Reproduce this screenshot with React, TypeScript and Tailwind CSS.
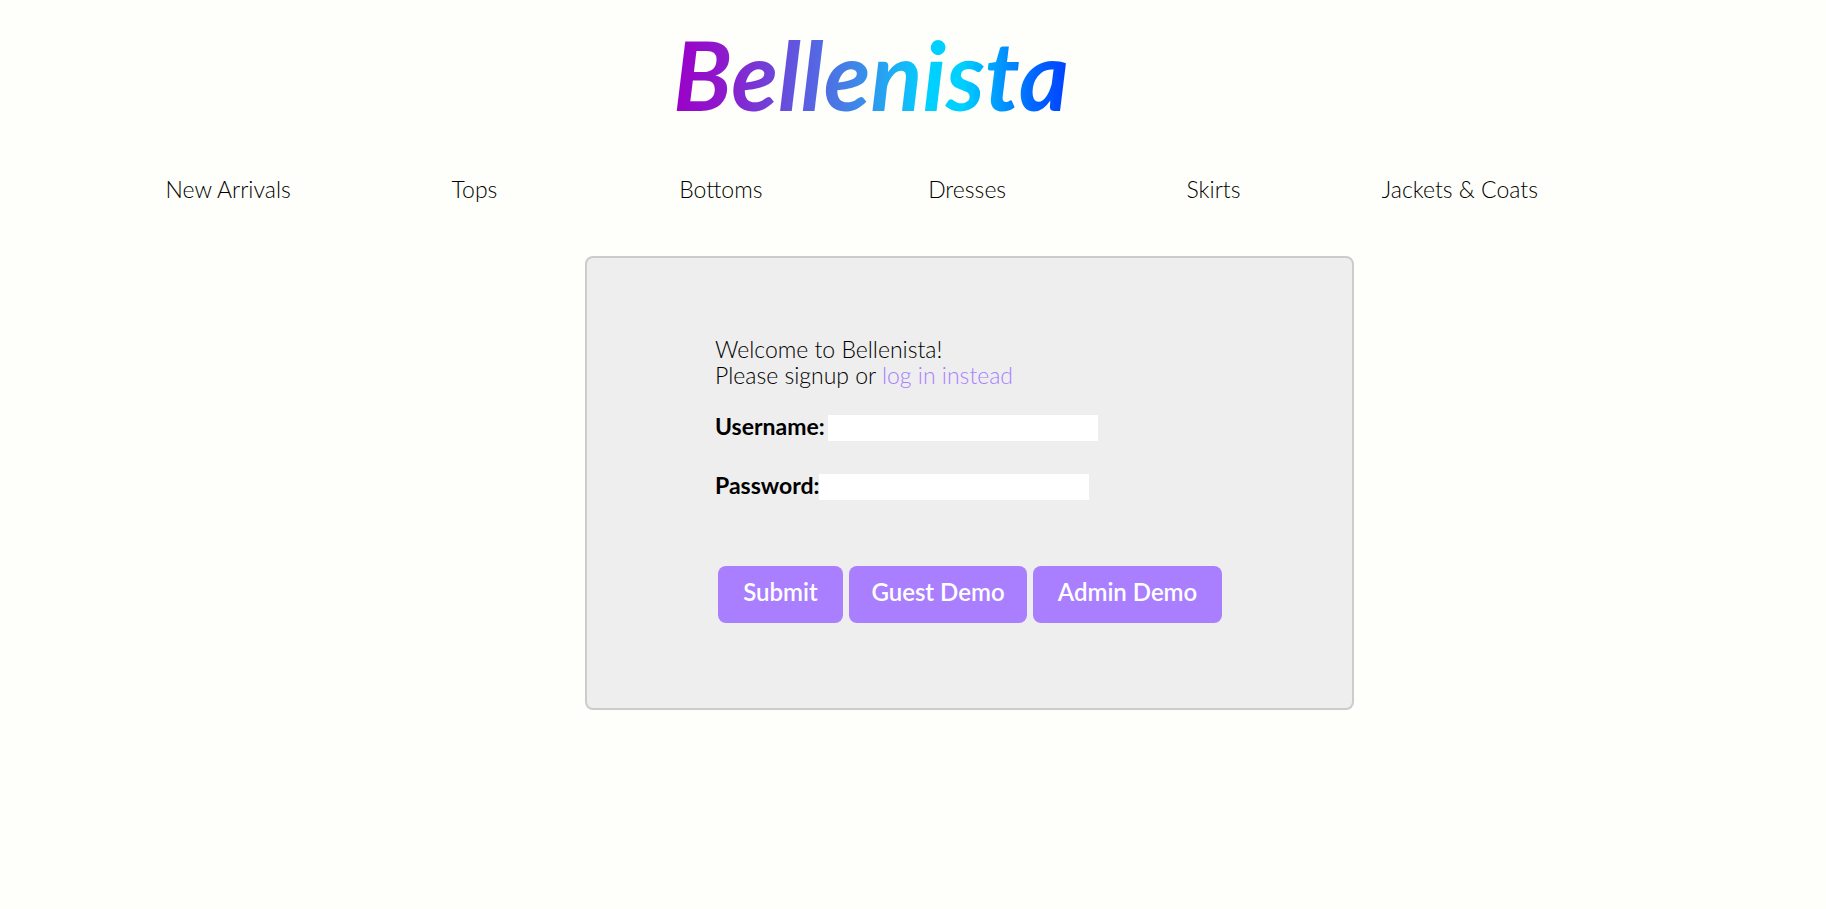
const categories = ["New Arrivals", "Tops", "Bottoms", "Dresses", "Skirts", "Jackets & Coats"];

const buttonClass =
  "h-[57px] cursor-pointer rounded-lg bg-[#a97fff] pb-1.5 text-2xl font-semibold text-white";

const labelClass = "font-bold leading-[22px]";

const inputClass = "h-[26px] w-[270px] bg-white text-xl outline-none";

export default function App() {
  return (
    <div className="min-h-screen bg-[#fefffa] font-['Lato',sans-serif] font-light text-black">
      <header>
        <div className="flex h-[164px] items-start justify-center pr-[84px]">
          <a
            href="#"
            className="bg-[linear-gradient(90deg,#9a00c8_0%,#8f18cc_12%,#5e5ae0_32%,#3f86e8_46%,#00d0ff_64%,#00d0ff_73%,#0066ff_91%,#0040ff_100%)] bg-clip-text text-[96px] font-bold italic leading-[148px] text-transparent"
          >
            Bellenista
          </a>
        </div>
        <nav className="pl-[105px] pr-[243px]">
          <ul className="grid grid-cols-6">
            {categories.map((name) => (
              <li key={name} className="text-center text-[23px] leading-[50px]">
                <a href="#">{name}</a>
              </li>
            ))}
          </ul>
        </nav>
      </header>
      <main className="flex justify-center pl-[113px] pt-[42px]">
        <form className="w-[769px] rounded-lg border-2 border-[#ccc] bg-[#eee] px-32 pb-[85px] pt-[78px] text-[23px]">
          <p className="leading-[26px]">
            Welcome to Bellenista!
            <br />
            Please signup or{" "}
            <a href="#" className="text-[#a97fff]">
              log in instead
            </a>
          </p>
          <div className="mt-[27px] flex items-start">
            <label htmlFor="username" className={`${labelClass} w-[113px]`}>
              Username:
            </label>
            <input id="username" type="text" className={inputClass} />
          </div>
          <div className="mt-[33px] flex items-start">
            <label htmlFor="password" className={`${labelClass} w-[104px]`}>
              Password:
            </label>
            <input id="password" type="password" className={inputClass} />
          </div>
          <div className="ml-[3px] mt-[66px] flex gap-1.5 whitespace-nowrap">
            <button type="submit" className={`${buttonClass} w-[125px]`}>
              Submit
            </button>
            <button type="button" className={`${buttonClass} w-[178px]`}>
              Guest Demo
            </button>
            <button type="button" className={`${buttonClass} w-[189px]`}>
              Admin Demo
            </button>
          </div>
        </form>
      </main>
    </div>
  );
}
